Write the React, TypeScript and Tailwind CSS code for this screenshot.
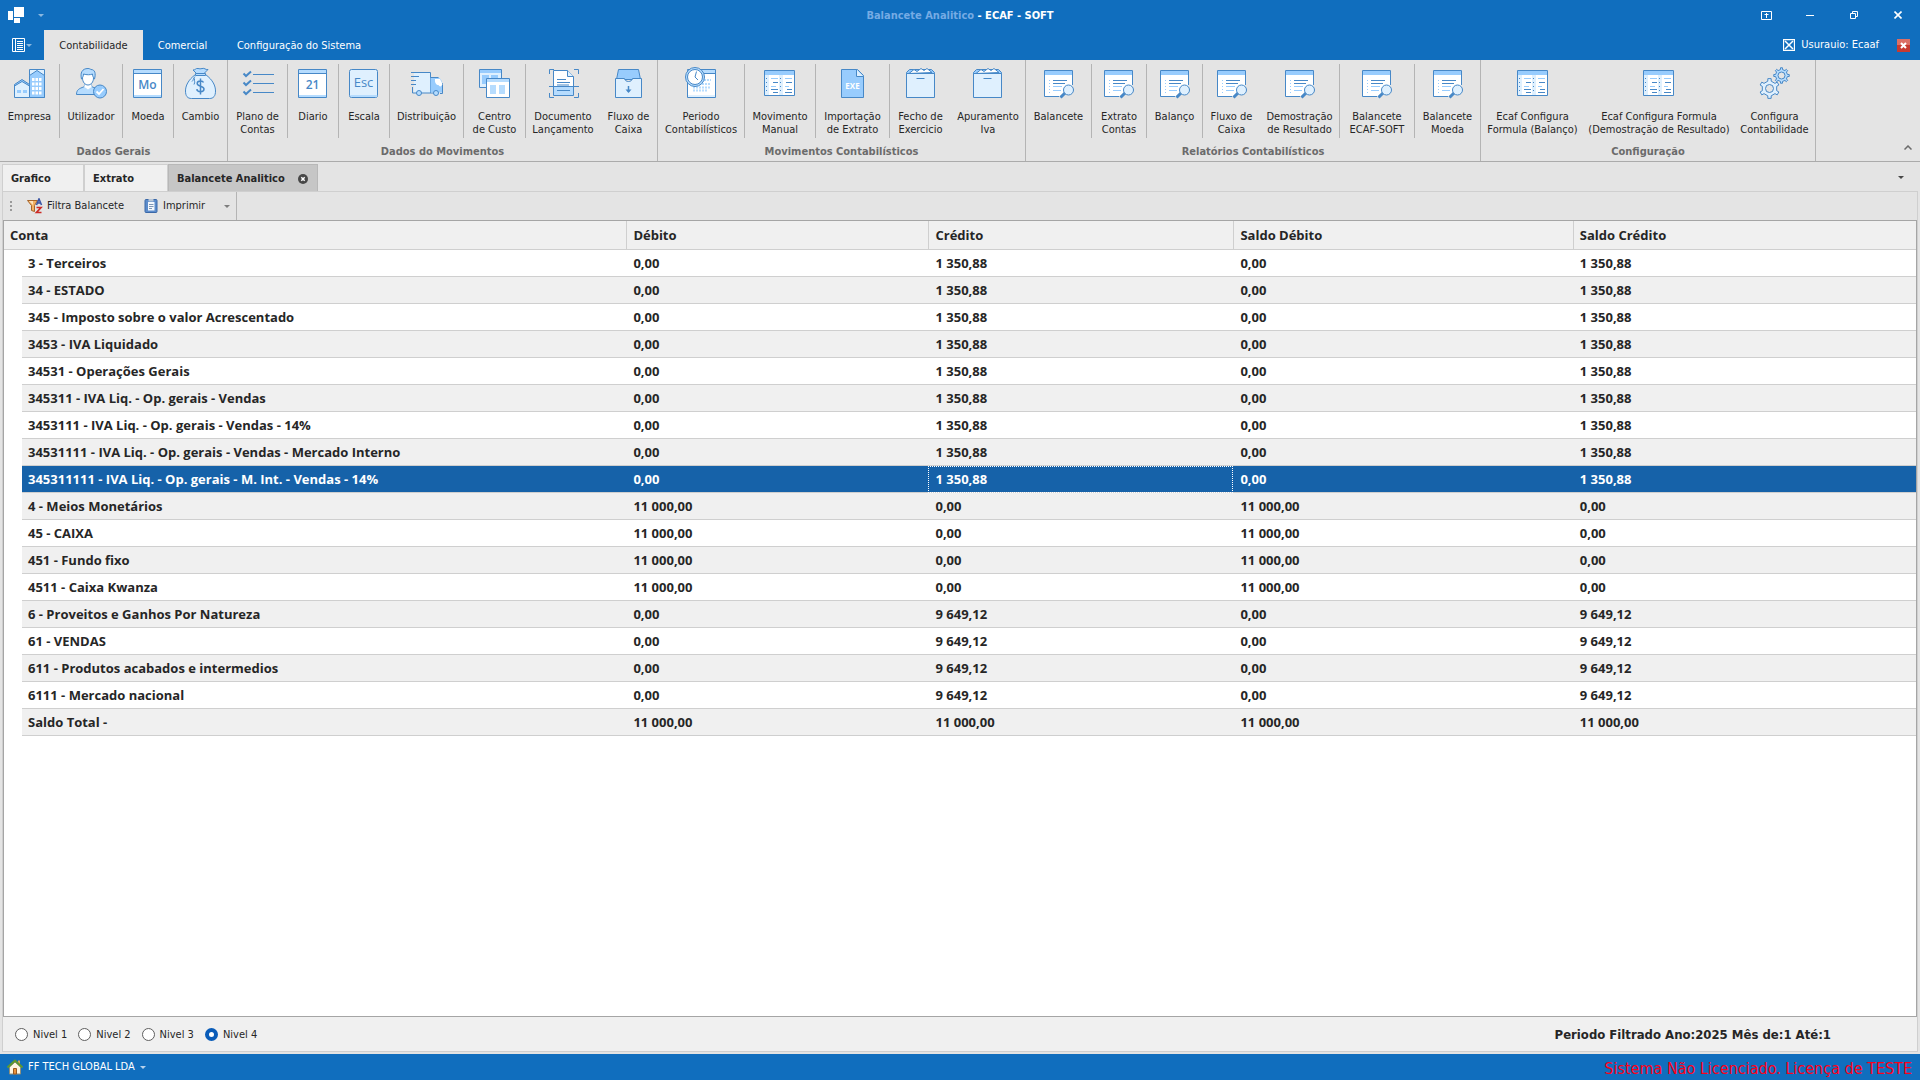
import { useState } from "react";
import type { ReactNode } from "react";

const DARK = "#4788c7";
const LIGHT = "#dff0fe";
const MID = "#98ccfd";
const SOFT = "#b6dcfe";

function Icon({ children }: { children: ReactNode }) {
  return (
    <svg width="32" height="32" viewBox="0 0 32 32" fill="none" stroke={DARK} className="shrink-0">
      {children}
    </svg>
  );
}

function CompanyIcon() {
  return (
    <Icon>
      <path d="M15.500 2.500h15v28h-15z" fill={LIGHT} />
      <path d="M15.500 30.500V8.500L23 3.500l7.500 5v22z" fill={MID} />
      <path d="M.5 30.500V18.500L8 13.500l7.500 5v12z" fill={LIGHT} />
      <path d="M.5 19V17.500L8 12.500l7.500 5V19L8 14.500z" fill={MID} />
      <path d="M18 12.500h2.500m1 0h2.500m1 0h2.500M18 17h2.500m1 0h2.500m1 0h2.500M18 21.500h2.500m1 0h2.500m1 0h2.500M18 26h2.500m1 0h2.500m1 0h2.500" stroke="#fff" strokeWidth="3" />
      <path d="M3 24.500h4m2 0h4" stroke={MID} strokeWidth="3" />
    </Icon>
  );
}

function UserIcon() {
  return (
    <Icon>
      <path d="M1.500 27.500c0-5 3-6 7-7.500 1-.5 1-1.500 1-3h7c0 1.500 0 2.500 1 3 4 1.500 7 2.500 7 7.500z" fill={SOFT} />
      <path d="M9.500 16v4l3.500 2.500 3.500-2.500v-4z" fill="#fff" stroke="none" />
      <path d="M6.500 12C5 6 7 1.500 13 1.500c1.500 0 2 .5 3 1 4 0 5 4 3.500 9.500z" fill={SOFT} />
      <path d="M7.500 11c0-1.500 1-1 1-4 3 1 7 1 9 0 0 3 1 2.500 1 4 0 4-2.500 7-5.500 7s-5.500-3-5.500-7z" fill="#fff" />
      <circle cx="25" cy="24.500" r="6.500" fill={MID} />
      <path d="M21.500 24.500l2.500 2.500 4.500-5" stroke="#fff" strokeWidth="1.800" />
    </Icon>
  );
}

function CalendarIcon({ label }: { label: string }) {
  return (
    <Icon>
      <path d="M1.500 2.500h28v28h-28z" fill="#fff" />
      <path d="M2 3h27v3H2z" fill={SOFT} stroke="none" />
      <path d="M2 28h27v2H2z" fill={SOFT} stroke="none" />
      <path d="M1.500 6.500h28" />
      <text x="15.500" y="22" textAnchor="middle" fontSize="12" fontWeight="600" fontFamily="Open Sans, sans-serif" fill={DARK} stroke="none">
        {label}
      </text>
    </Icon>
  );
}

function MoneyIcon() {
  return (
    <Icon>
      <path d="M10.500 7.500C3 13 .5 19 .5 24c0 5 2 7.500 6 7.500h18c4 0 6-2.500 6-7.500 0-5-2.500-11-10-16.500z" fill={LIGHT} />
      <path d="M11.500 6.500L8 3c3 0 2.500-2 5-1.500 1.500.3 2.500.5 4 0C20 .7 20 3 23 2.500l-4 4z" fill={SOFT} />
      <path d="M10.500 6.500h10v2h-10zM10 9.500c-2 2-1.500 4-3 5m2.500-3c-.5 3 1 3-.5 6" fill={SOFT} />
      <path d="M18.500 15.500c-.5-1.200-1.500-1.500-3-1.500-2 0-3.300.9-3.300 2.500 0 3.500 6.800 2 6.800 5.500 0 1.700-1.500 2.700-3.500 2.700s-3.500-.8-3.700-2.500M15.500 11.500v16" strokeWidth="1.500" />
    </Icon>
  );
}

function ChecklistIcon() {
  return (
    <Icon>
      <path d="M1.500 6.500l2.500 2.500 5-4.500M1.500 15.500l2.500 2.500 5-4.500M1.500 24.500l2.500 2.500 5-4.500" strokeWidth="2" />
      <path d="M11 7.500h21M11 16.500h21M11 25.500h21" />
    </Icon>
  );
}

function KeyIcon() {
  return (
    <Icon>
      <rect x="1.500" y="2.500" width="28" height="28" rx="2" fill={LIGHT} />
      <path d="M2 28h27v2H3z" fill={SOFT} stroke="none" />
      <text x="15.500" y="20" textAnchor="middle" fontSize="13" fontFamily="Open Sans, sans-serif" fill={DARK} stroke="none">
        Esc
      </text>
    </Icon>
  );
}

function TruckIcon() {
  return (
    <Icon>
      <path d="M3 6h16v20H3z" fill={LIGHT} stroke="none" />
      <path d="M0 5.500h19.500v20.500M1.500 20v6M0 9.500h8M0 13.500h5M0 17.500h5M1.500 26h23" />
      <path d="M19.500 10.500h8c3 1.500 4 5 4 9v6h-12z" fill={MID} stroke="none" />
      <path d="M19.500 10.500h8M31.500 16v10.500H29" />
      <path d="M24 12h5l2.500 5c-1 3-3 3-4 1-2 0-4-2-3.500-6z" fill="#fff" stroke="none" />
      <circle cx="8" cy="26" r="2.500" fill={SOFT} />
      <circle cx="25" cy="26" r="2.500" fill={SOFT} />
    </Icon>
  );
}

function WindowsIcon() {
  return (
    <Icon>
      <path d="M.5 2.500h22v18H.5z" fill={LIGHT} />
      <path d="M1 3h21v3H1z" fill={MID} stroke="none" />
      <path d="M3 8h7v9H3zM12 8h7v9h-7z" fill={MID} stroke="none" />
      <path d="M7.500 11.500h23v19h-23z" fill="#fff" />
      <path d="M8 12h22v3H8z" fill={SOFT} stroke="none" />
      <path d="M11 18h6v9h-6zM20 18h6v9h-6z" fill={SOFT} stroke="none" />
    </Icon>
  );
}

function ScanIcon() {
  return (
    <Icon>
      <path d="M6.500 3.500h14l6 6v19h-20z" fill="#fff" />
      <path d="M7 20h19v8H7z" fill={SOFT} stroke="none" />
      <path d="M20.500 3.500v6h6" fill={LIGHT} />
      <path d="M10 12.500h9M10 15.500h13M10 23.500h13M2 19.500h30M10 18h12" />
      <path d="M2.500 7V2.500H7M27 2.500h4.500V7M2.500 26v4.500H7M27 30.500h4.500V26" />
    </Icon>
  );
}

function InboxIcon() {
  return (
    <Icon>
      <path d="M3.500 12.500l2-10h20l2 10z" fill={MID} />
      <path d="M2.500 11.500h9c.5 4 7.500 4 8 0h9v19h-26z" fill={LIGHT} />
      <path d="M15.500 19v6" strokeWidth="1.500" />
      <path d="M12.500 22.500h6l-3 3.500z" fill={DARK} stroke="none" />
    </Icon>
  );
}

function ClockIcon() {
  return (
    <Icon>
      <path d="M2.500 2.500h28v28h-28z" fill="#fff" />
      <path d="M3 3h27v4H3z" fill={SOFT} stroke="none" />
      <path d="M3 28h27v2H3z" fill={LIGHT} stroke="none" />
      <path d="M2.500 6.500h28" />
      <path d="M19 13h7M8 20.500h17M8 23.500h14M17 17h8" stroke={SOFT} strokeWidth="2" strokeDasharray="2 1" />
      <circle cx="10" cy="10" r="9.500" fill={SOFT} />
      <circle cx="10" cy="10" r="7.500" fill="#fff" />
      <path d="M11.500 4.500L10 10l3 3" />
    </Icon>
  );
}

function LedgerIcon() {
  return (
    <Icon>
      <path d="M.5 3.500h30v25H.5z" fill="#fff" />
      <path d="M1 4h29v4H1z" fill={MID} stroke="none" />
      <path d="M1 8h4v20H1zM15 8h4v20h-4z" fill={LIGHT} stroke="none" />
      <path d="M2.500 11v15M16.500 11v15" strokeDasharray="1 3" />
      <path d="M7 11.500h7M7 19.500h5M21 11.500h7M21 19.500h4" stroke={MID} />
      <path d="M9 15.500h5M7 22.500h7M9 25.500h5M22 15.500h6M23 22.500h5M21 25.500h7" />
    </Icon>
  );
}

function ExeIcon() {
  return (
    <Icon>
      <path d="M4.500 2.500h16l6 6v22h-22z" fill={MID} />
      <path d="M19.500 2.500v7h7" fill={LIGHT} />
      <text x="15.500" y="22" textAnchor="middle" fontSize="8" fontWeight="700" fontFamily="Open Sans, sans-serif" fill="#fff" stroke="none">
        EXE
      </text>
    </Icon>
  );
}

function BoxIcon() {
  return (
    <Icon>
      <path d="M1.500 5.500l3-3h22l3 3v3h-28z" fill={MID} />
      <path d="M4 6.500l5-4 3 2 4-3 3 2 3-2 5 4z" fill="#fff" />
      <path d="M1.500 6.500h28v24h-28z" fill={LIGHT} />
      <path d="M11.500 11.500h8" />
    </Icon>
  );
}

function ReportIcon() {
  return (
    <Icon>
      <path d="M29.500 18V3.500h-28v26H16" fill="#fff" />
      <path d="M16 29.500V18h13.500" fill="#fff" stroke="none" />
      <path d="M2 4h27v4H2z" fill={MID} stroke="none" />
      <path d="M6.500 13v13" stroke={MID} strokeDasharray="1 2" />
      <path d="M10 13.500h14M10 16.500h12" />
      <path d="M10 19.500h9M10 23.500h8" stroke={MID} />
      <path d="M22 26l-4.500 4.500" strokeWidth="3" />
      <circle cx="25.500" cy="23" r="5" fill={LIGHT} />
    </Icon>
  );
}

function gearPath(cx: number, cy: number, outer: number, inner: number, teeth: number) {
  const pts: string[] = [];
  const step = (Math.PI * 2) / teeth;
  for (let i = 0; i < teeth; i++) {
    const a = i * step - Math.PI / 2;
    const corners: [number, number][] = [
      [a - step * 0.22, inner],
      [a - step * 0.16, outer],
      [a + step * 0.16, outer],
      [a + step * 0.22, inner],
    ];
    corners.forEach(([t, r]) => {
      pts.push(`${(cx + Math.cos(t) * r).toFixed(2)} ${(cy + Math.sin(t) * r).toFixed(2)}`);
    });
  }
  return `M${pts.join("L")}Z`;
}

function GearsIcon() {
  return (
    <Icon>
      <path d={gearPath(10.5, 21.5, 10, 7.5, 6)} fill={LIGHT} />
      <circle cx="10.500" cy="21.500" r="4" fill="#e4e4e4" />
      <path d={gearPath(22.5, 8.5, 7.8, 6, 8)} fill={SOFT} />
      <circle cx="22.500" cy="8.500" r="3.500" fill="#e4e4e4" />
    </Icon>
  );
}

interface RibbonItem {
  lines: string[];
  icon: ReactNode;
  width: string;
  divider?: boolean;
}

const groups: { title: string; items: RibbonItem[] }[] = [
  {
    title: "Dados Gerais",
    items: [
      { lines: ["Empresa"], icon: <CompanyIcon />, width: "w-[60px]", divider: true },
      { lines: ["Utilizador"], icon: <UserIcon />, width: "w-[63px]", divider: true },
      { lines: ["Moeda"], icon: <CalendarIcon label="Mo" />, width: "w-[51px]", divider: true },
      { lines: ["Cambio"], icon: <MoneyIcon />, width: "w-[53px]" },
    ],
  },
  {
    title: "Dados do Movimentos",
    items: [
      { lines: ["Plano de", "Contas"], icon: <ChecklistIcon />, width: "w-[60px]", divider: true },
      { lines: ["Diario"], icon: <CalendarIcon label="21" />, width: "w-[51px]", divider: true },
      { lines: ["Escala"], icon: <KeyIcon />, width: "w-[51px]", divider: true },
      { lines: ["Distribuição"], icon: <TruckIcon />, width: "w-[74px]", divider: true },
      { lines: ["Centro", "de Custo"], icon: <WindowsIcon />, width: "w-[62px]", divider: true },
      { lines: ["Documento", "Lançamento"], icon: <ScanIcon />, width: "w-[74px]" },
      { lines: ["Fluxo de", "Caixa"], icon: <InboxIcon />, width: "w-[57px]" },
    ],
  },
  {
    title: "Movimentos Contabilísticos",
    items: [
      { lines: ["Periodo", "Contabilísticos"], icon: <ClockIcon />, width: "w-[87px]", divider: true },
      { lines: ["Movimento", "Manual"], icon: <LedgerIcon />, width: "w-[71px]", divider: true },
      { lines: ["Importação", "de Extrato"], icon: <ExeIcon />, width: "w-[74px]", divider: true },
      { lines: ["Fecho de", "Exercicio"], icon: <BoxIcon />, width: "w-[61px]" },
      { lines: ["Apuramento", "Iva"], icon: <BoxIcon />, width: "w-[74px]" },
    ],
  },
  {
    title: "Relatórios Contabilísticos",
    items: [
      { lines: ["Balancete"], icon: <ReportIcon />, width: "w-[66px]", divider: true },
      { lines: ["Extrato", "Contas"], icon: <ReportIcon />, width: "w-[55px]", divider: true },
      { lines: ["Balanço"], icon: <ReportIcon />, width: "w-[56px]", divider: true },
      { lines: ["Fluxo de", "Caixa"], icon: <ReportIcon />, width: "w-[57px]" },
      { lines: ["Demostração", "de Resultado"], icon: <ReportIcon />, width: "w-[80px]", divider: true },
      { lines: ["Balancete", "ECAF-SOFT"], icon: <ReportIcon />, width: "w-[75px]", divider: true },
      { lines: ["Balancete", "Moeda"], icon: <ReportIcon />, width: "w-[65px]" },
    ],
  },
  {
    title: "Configuração",
    items: [
      { lines: ["Ecaf Configura", "Formula (Balanço)"], icon: <LedgerIcon />, width: "w-[103px]" },
      { lines: ["Ecaf Configura Formula", "(Demostração de Resultado)"], icon: <LedgerIcon />, width: "w-[150px]" },
      { lines: ["Configura", "Contabilidade"], icon: <GearsIcon />, width: "w-[81px]" },
    ],
  },
];

const columns = ["Conta", "Débito", "Crédito", "Saldo Débito", "Saldo Crédito"];

const credito = ["0,00", "1 350,88", "0,00", "1 350,88"];
const caixa = ["11 000,00", "0,00", "11 000,00", "0,00"];
const vendas = ["0,00", "9 649,12", "0,00", "9 649,12"];

const rows: { conta: string; values: string[] }[] = [
  { conta: "3 - Terceiros", values: credito },
  { conta: "34 - ESTADO", values: credito },
  { conta: "345 - Imposto sobre o valor Acrescentado", values: credito },
  { conta: "3453 - IVA Liquidado", values: credito },
  { conta: "34531 - Operações Gerais", values: credito },
  { conta: "345311 - IVA Liq. - Op. gerais - Vendas", values: credito },
  { conta: "3453111 - IVA Liq. - Op. gerais - Vendas - 14%", values: credito },
  { conta: "34531111 - IVA Liq. - Op. gerais - Vendas - Mercado Interno", values: credito },
  { conta: "345311111 - IVA Liq. - Op. gerais - M. Int. - Vendas - 14%", values: credito },
  { conta: "4 - Meios Monetários", values: caixa },
  { conta: "45 - CAIXA", values: caixa },
  { conta: "451 - Fundo fixo", values: caixa },
  { conta: "4511 - Caixa Kwanza", values: caixa },
  { conta: "6 - Proveitos e Ganhos Por Natureza", values: vendas },
  { conta: "61 - VENDAS", values: vendas },
  { conta: "611 - Produtos acabados e intermedios", values: vendas },
  { conta: "6111 - Mercado nacional", values: vendas },
  { conta: "Saldo Total -", values: ["11 000,00", "11 000,00", "11 000,00", "11 000,00"] },
];

function Caret({ className }: { className: string }) {
  return (
    <svg width="6" height="3" viewBox="0 0 6 3" className={className}>
      <path d="M0 0h6L3 3z" fill="currentColor" />
    </svg>
  );
}

function TitleBar() {
  return (
    <header className="grid h-[30px] grid-cols-[1fr_auto_1fr] items-center bg-[#106ebe] text-white">
      <div className="flex items-center gap-[14px] pl-2">
        <svg width="16" height="16" viewBox="0 0 16 16" fill="#fff">
          <path d="M6 0h10v10H6zM0 4h5v9H0zM6 11h6v5H6z" />
        </svg>
        <button aria-label="Personalizar">
          <Caret className="text-[#8ab8e0]" />
        </button>
      </div>
      <h1 className="pt-px font-bold">
        <span className="text-[#75abe4]">Balancete Analitico</span> - ECAF - SOFT
      </h1>
      <div className="flex items-center justify-end">
        <button aria-label="Ecrã completo" className="flex w-11 justify-center">
          <svg width="11" height="9" viewBox="0 0 11 9" fill="none" stroke="#fff">
            <path d="M.5.5h10v8H.5zM5.500 2v5M3.500 3.500h4" />
          </svg>
        </button>
        <button aria-label="Minimizar" className="flex w-11 justify-center">
          <svg width="8" height="8" viewBox="0 0 8 8" stroke="#fff">
            <path d="M0 4.500h8" />
          </svg>
        </button>
        <button aria-label="Restaurar" className="flex w-11 justify-center">
          <svg width="8" height="8" viewBox="0 0 8 8" fill="none" stroke="#fff">
            <path d="M.5 2.500h5v5h-5zM2.500 2V.5h5v5H6" />
          </svg>
        </button>
        <button aria-label="Fechar" className="flex w-11 justify-center">
          <svg width="8" height="8" viewBox="0 0 8 8" stroke="#fff" strokeWidth="1.600">
            <path d="M.5.5l7 7M7.500.5l-7 7" />
          </svg>
        </button>
      </div>
    </header>
  );
}

function RibbonTabs() {
  return (
    <nav className="flex h-[30px] items-stretch bg-[#106ebe] text-white">
      <button aria-label="Menu" className="flex w-11 items-center gap-px pl-3">
        <svg width="13" height="14" viewBox="0 0 13 14" fill="none" stroke="#fff">
          <path d="M.5.5h12v13H.5zM3.500 0v14M5 3.500h6M5 5.500h6M5 7.500h6M5 9.500h6M5 11.500h6" />
        </svg>
        <Caret className="text-[#8ab8e0]" />
      </button>
      <button className="w-[99px] bg-[#e4e4e4] pt-[2px] text-[#262626]">Contabilidade</button>
      <button className="w-[79px] pt-[2px]">Comercial</button>
      <button className="w-[154px] pt-[2px]">Configuração do Sistema</button>
      <div className="ml-auto flex items-center pr-[10px]">
        <button className="flex items-center gap-[6px]">
          <svg width="12" height="12" viewBox="0 0 12 12" fill="none" stroke="#fff">
            <path d="M.5.5h11v11H.5z" strokeWidth="1.300" />
            <path d="M2 2l8 8M10 2l-8 8" strokeWidth="1.500" />
          </svg>
          Usurauio: Ecaaf
        </button>
        <button aria-label="Sair" className="ml-[18px]">
          <svg width="13" height="13" viewBox="0 0 13 13">
            <path d="M0 0h13v13H0z" fill="#c63a30" />
            <path d="M0 0h13v6H0z" fill="#db6f65" />
            <path d="M4 4l5 5M9 4L4 9" stroke="#fff" strokeWidth="2" />
          </svg>
        </button>
      </div>
    </nav>
  );
}

function Ribbon() {
  return (
    <section className="flex border-b border-[#ababab]">
      {groups.map((group) => (
        <div key={group.title} className="flex shrink-0 flex-col border-r border-[#b4b4b4] pt-1">
          <div className="flex h-[74px]">
            {group.items.map((item) => (
              <button
                key={item.lines.join(" ")}
                className={`flex flex-col items-center pt-[3px] text-center leading-[13px] whitespace-nowrap ${item.width} ${
                  item.divider ? "border-r border-[#b4b4b4]" : ""
                }`}
              >
                {item.icon}
                <span className="mt-[11px]">
                  {item.lines.map((line) => (
                    <span key={line} className="block">
                      {line}
                    </span>
                  ))}
                </span>
              </button>
            ))}
          </div>
          <h2 className="pt-[7px] pb-[3px] text-center leading-[13px] font-bold text-[#6b6b6b]">{group.title}</h2>
        </div>
      ))}
      <button aria-label="Recolher" className="mt-auto mr-2 mb-[11px] ml-auto">
        <svg width="8" height="5" viewBox="0 0 8 5" fill="none" stroke="#6b6b6b" strokeWidth="1.500">
          <path d="M.5 4.500L4 1l3.500 3.500" />
        </svg>
      </button>
    </section>
  );
}

function DocumentTabs() {
  return (
    <div className="flex items-stretch pt-[2px] pr-4 pl-[2px] font-bold">
      <button className="h-[27px] w-[82px] border border-b-0 border-[#cfcfcf] bg-[#f0f0f0] pt-px pl-2 text-left">Grafico</button>
      <button className="h-[27px] w-[84px] border border-b-0 border-[#cfcfcf] bg-[#f0f0f0] pt-px pl-2 text-left">Extrato</button>
      <div className="flex h-[27px] w-[150px] items-center justify-between border border-b-0 border-[#b8b8b8] bg-[#c6c6c6] pt-px pr-[9px] pl-2">
        <button>Balancete Analitico</button>
        <button aria-label="Fechar separador">
          <svg width="10" height="10" viewBox="0 0 10 10">
            <circle cx="5" cy="5" r="5" fill="#474747" />
            <path d="M3.300 3.300l3.400 3.400M6.700 3.300L3.300 6.700" stroke="#fff" strokeWidth="1.500" />
          </svg>
        </button>
      </div>
      <button aria-label="Lista de separadores" className="ml-auto">
        <Caret className="text-[#474747]" />
      </button>
    </div>
  );
}

function Toolbar() {
  return (
    <div className="flex">
      <div className="flex h-7 items-center border-r border-[#b4b4b4] pr-[6px] pl-[7px]">
        <svg width="2" height="10" viewBox="0 0 2 10" fill="#9a9a9a">
          <path d="M0 0h2v2H0zM0 4h2v2H0zM0 8h2v2H0z" />
        </svg>
        <button className="ml-[15px] flex items-center gap-1">
          <svg width="16" height="16" viewBox="0 0 16 16">
            <path d="M.5 2.500h10L7.500 7.500v6l-3-1v-5z" fill="#f2b264" stroke="#a8652a" />
            <path d="M2 3h4v4z" fill="#fde3bd" />
            <path d="M9.500 7L12 1l2.500 6M10.500 5h3" fill="none" stroke="#3a55a5" strokeWidth="1.600" />
            <path d="M9.500 9.500h4.500l-4.500 5H14.500" fill="none" stroke="#cc2a24" strokeWidth="1.700" />
          </svg>
          Filtra Balancete
        </button>
        <button className="ml-5 flex items-center gap-[5px]">
          <svg width="14" height="16" viewBox="0 0 14 16">
            <rect x="1" y="1.500" width="12" height="13" rx="1" fill="#5c8ccb" stroke="#3a68a8" />
            <path d="M4 4h6.500v8.500H4z" fill="#f4f8fd" />
            <path d="M4.500 1h5v2.500h-5z" fill="#b9c6d6" />
            <path d="M5 6.500h4.500M5 8.500h4.500M5 10.500h3" stroke="#7f97b5" />
          </svg>
          Imprimir
        </button>
        <button aria-label="Mais opções" className="ml-[19px]">
          <Caret className="text-[#7d7d7d]" />
        </button>
      </div>
    </div>
  );
}

function BalanceTable() {
  const [selected, setSelected] = useState(8);

  return (
    <table className="w-full table-fixed border-separate border-spacing-0 text-left text-[13px] leading-[18px] font-bold text-[#262626]">
      <colgroup>
        <col className="w-[18px]" />
        <col />
        <col className="w-[15.8%]" />
        <col className="w-[15.95%]" />
        <col className="w-[17.75%]" />
        <col className="w-[17.95%]" />
      </colgroup>
      <thead>
        <tr>
          {columns.map((name, i) => (
            <th
              key={name}
              colSpan={i === 0 ? 2 : 1}
              className={`h-[29px] border-b border-[#cfcfcf] bg-[#f0f0f0] py-0 pl-[6px] ${i === 0 ? "" : "border-l"}`}
            >
              {name}
            </th>
          ))}
        </tr>
      </thead>
      <tbody>
        {rows.map((row, i) => {
          const active = i === selected;
          const tone = active ? "bg-[#1662a9] text-white" : i % 2 ? "bg-[#f0f0f0]" : "bg-white";
          return (
            <tr key={row.conta} onClick={() => setSelected(i)}>
              <td className="p-0" />
              <td className={`h-[27px] border-b border-[#cfcfcf] py-0 pl-[6px] ${tone}`}>{row.conta}</td>
              {row.values.map((value, j) => (
                <td
                  key={columns[j + 1]}
                  className={`h-[27px] border-b border-[#cfcfcf] py-0 pl-[7px] ${tone} ${
                    active && j === 1 ? "outline-1 -outline-offset-1 outline-dotted outline-white" : ""
                  }`}
                >
                  {value}
                </td>
              ))}
            </tr>
          );
        })}
      </tbody>
    </table>
  );
}

function LevelBar() {
  const [level, setLevel] = useState(4);

  return (
    <div className="flex h-[34px] items-center justify-between bg-[#f0f0f0] pt-px pr-[86px] pl-3">
      <div className="flex gap-[11px]">
        {[1, 2, 3, 4].map((n) => (
          <label key={n} className="flex items-center gap-[5px]">
            <input
              type="radio"
              name="nivel"
              checked={level === n}
              onChange={() => setLevel(n)}
              className="size-[13px] appearance-none rounded-full border border-[#5f5f5f] bg-white checked:border-4 checked:border-[#0a5cb8]"
            />
            Nivel {n}
          </label>
        ))}
      </div>
      <p className="text-[13px] font-bold">Periodo Filtrado Ano:2025 Mês de:1 Até:1</p>
    </div>
  );
}

function StatusBar() {
  return (
    <footer className="mt-[2px] flex h-[26px] items-center justify-between bg-[#106ebe] pr-2 pl-[7px] text-white">
      <button className="flex items-center gap-[5px]">
        <svg width="16" height="16" viewBox="0 0 16 16">
          <path d="M2.500 8L8 3l5.500 5v7h-11z" fill="#fdf6e3" stroke="#8f8f7a" />
          <path d="M11 1.500h2v4h-2z" fill="#d9a45b" />
          <path d="M.5 8.500L8 1.500l7.500 7" fill="none" stroke="#5f9a2d" strokeWidth="2" />
          <path d="M6.500 9.500h3v5.500h-3z" fill="#e8923c" stroke="#9a5a20" />
        </svg>
        FF TECH GLOBAL LDA
        <Caret className="text-[#b6d2ec]" />
      </button>
      <p className="pt-1 text-[16px] leading-[22px] text-[#ff0018]">Sistema Não Licenciado. Licença de TESTE</p>
    </footer>
  );
}

export default function App() {
  return (
    <div className="flex min-h-screen flex-col bg-[#e4e4e4] font-['DejaVu_Sans_Condensed','DejaVu_Sans',sans-serif] text-[11px] leading-[14px] text-[#262626]">
      <TitleBar />
      <RibbonTabs />
      <Ribbon />
      <DocumentTabs />
      <main className="mx-[2px] flex flex-1 flex-col border border-[#cfcfcf]">
        <Toolbar />
        <div className="flex-1 border border-[#a5a5a5] bg-white font-['Open_Sans','Noto_Sans',sans-serif]">
          <BalanceTable />
        </div>
        <LevelBar />
      </main>
      <StatusBar />
    </div>
  );
}
